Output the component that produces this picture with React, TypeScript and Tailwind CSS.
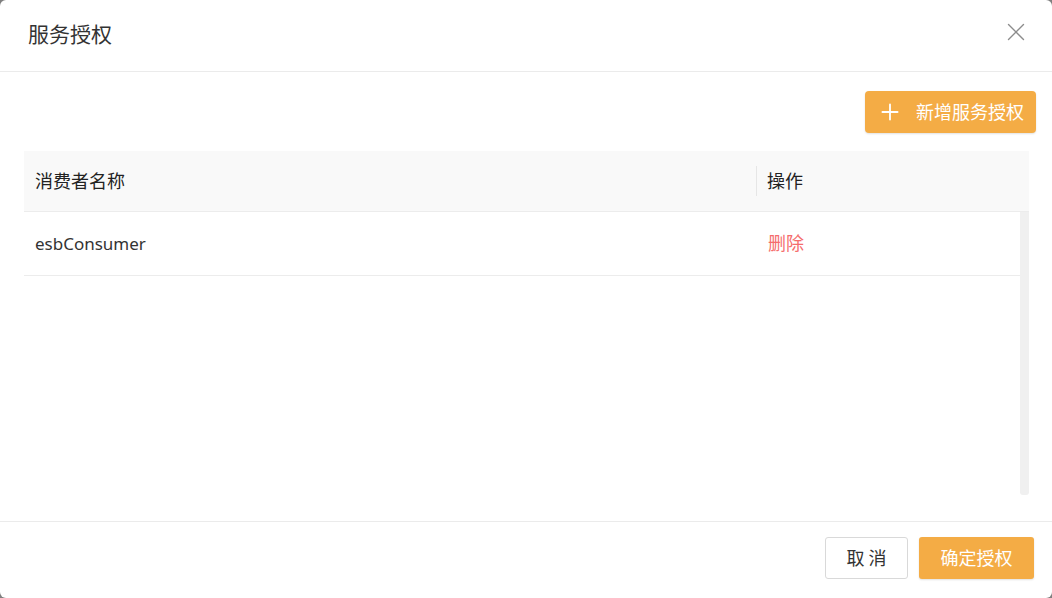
import { X, Plus } from "lucide-react"

const FONT = "font-['Noto_Sans','Noto_Sans_CJK_SC',sans-serif]"

export default function App() {
  return (
    <div className={`w-[1052px] h-[598px] bg-[#7f7f7f] ${FONT}`}>
      <div className="w-full h-full bg-white rounded-[6px] flex flex-col overflow-hidden">
        {/* Header */}
        <div className="h-[72px] shrink-0 border-b border-[#ebebeb] flex items-center justify-between pl-[28px] pr-[21px] pb-[2px]">
          <span className="text-[21px] text-[#333] leading-none">服务授权</span>
          <X size={30} strokeWidth={1.1} className="text-[#8c8c8c] -mt-[6px]" />
        </div>

        {/* Body */}
        <div className="flex-1 flex flex-col pl-[24px] pr-[16px] pt-[19px]">
          <div className="flex justify-end">
            <button className="h-[42px] w-[171px] rounded-[4px] bg-[#f4ac45] text-white text-[18px] flex items-center pl-[12px] gap-[13px] shadow-[0_1px_2px_rgba(0,0,0,0.12)]">
              <Plus size={26} strokeWidth={1.7} />
              <span>新增服务授权</span>
            </button>
          </div>

          <div className="mt-[18px] w-[1005px]">
            <div className="h-[61px] bg-[#f9f9f9] border-b border-[#ececec] flex items-center text-[18px] text-[#222]">
              <div className="w-[732px] pl-[11px]">消费者名称</div>
              <div className="h-[30px] border-l border-[#e6e6e6] pl-[10px] flex items-center">操作</div>
            </div>
            <div className="flex">
              <div className="flex-1">
                <div className="h-[64px] border-b border-[#ececec] flex items-center">
                  <div className="w-[732px] pl-[11px] text-[#333] text-[17px]">esbConsumer</div>
                  <div className="pl-[12px] text-[#f56c6c] text-[18px]">删除</div>
                </div>
              </div>
              <div className="w-[9px] h-[283px] bg-[#f0f0f0] rounded-b-[3px]" />
            </div>
          </div>
        </div>

        {/* Footer */}
        <div className="h-[77px] shrink-0 border-t border-[#ebebeb] flex items-center justify-end gap-[11px] pr-[18px] pb-[4px]">
          <button className="h-[42px] w-[83px] rounded-[3px] border border-[#d9d9d9] bg-white text-[18px] text-[#333] tracking-[4px] pl-[4px]">
            取消
          </button>
          <button className="h-[42px] w-[115px] rounded-[3px] bg-[#f4ac45] text-white text-[18px] shadow-[0_1px_2px_rgba(0,0,0,0.12)]">
            确定授权
          </button>
        </div>
      </div>
    </div>
  )
}
